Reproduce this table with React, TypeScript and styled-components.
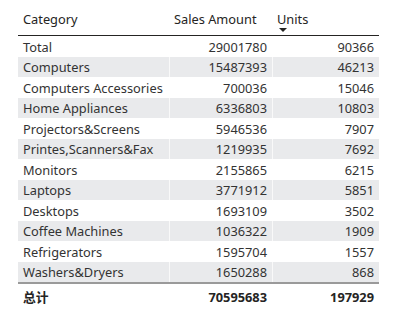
import React from "react";
import styled, { createGlobalStyle } from "styled-components";

const Global = createGlobalStyle`
  html, body { margin: 0; padding: 0; background: #ffffff; }
  body { font-family: "Noto Sans", "Noto Sans CJK SC", sans-serif; }
`;

const Page = styled.div`
  width: 404px;
  height: 331px;
  padding-left: 18px;
  box-sizing: border-box;
  background: #fff;
`;

const Table = styled.div`
  width: 361px;
  display: grid;
  grid-template-columns: 151px 103px 107px;
  font-size: 12.8px;
  color: #333;
`;

const HeaderCell = styled.div`
  position: relative;
  height: 36px;
  border-bottom: 1px solid #252423;
  padding: 11px 5px 0;
  box-sizing: border-box;
  color: #252423;
  white-space: nowrap;
  line-height: 17px;
`;

const SortArrow = styled.span`
  position: absolute;
  left: 7px;
  top: 28px;
  width: 0;
  height: 0;
  border-left: 4px solid transparent;
  border-right: 4px solid transparent;
  border-top: 4px solid #252423;
`;

const Cell = styled.div<{ $shade: boolean; $num?: boolean; $first?: boolean }>`
  height: 20.5px;
  line-height: 17px;
  padding: 2.5px 5px 0;
  box-sizing: border-box;
  background: ${(p) => (p.$shade ? "#e9eaec" : "#ffffff")};
  text-align: ${(p) => (p.$num ? "right" : "left")};
  border-left: ${(p) => (p.$first ? "none" : "1px solid rgba(255,255,255,0.7)")};
  white-space: nowrap;
  overflow: hidden;
`;

const TotalCell = styled.div<{ $num?: boolean }>`
  height: 28px;
  border-top: 2px solid #9a9a9a;
  padding: 3px 5px 0;
  box-sizing: border-box;
  font-weight: 700;
  color: #252423;
  line-height: 20px;
  text-align: ${(p) => (p.$num ? "right" : "left")};
`;

const rows: [string, number, number][] = [
  ["Total", 29001780, 90366],
  ["Computers", 15487393, 46213],
  ["Computers Accessories", 700036, 15046],
  ["Home Appliances", 6336803, 10803],
  ["Projectors&Screens", 5946536, 7907],
  ["Printes,Scanners&Fax", 1219935, 7692],
  ["Monitors", 2155865, 6215],
  ["Laptops", 3771912, 5851],
  ["Desktops", 1693109, 3502],
  ["Coffee Machines", 1036322, 1909],
  ["Refrigerators", 1595704, 1557],
  ["Washers&Dryers", 1650288, 868],
];

export default function App() {
  return (
    <Page>
      <Global />
      <Table>
        <HeaderCell>Category</HeaderCell>
        <HeaderCell>Sales Amount</HeaderCell>
        <HeaderCell>
          Units
          <SortArrow />
        </HeaderCell>
        {rows.map(([name, sales, units], i) => {
          const shade = i % 2 === 1;
          return (
            <React.Fragment key={name}>
              <Cell $shade={shade} $first>{name}</Cell>
              <Cell $shade={shade} $num>{sales}</Cell>
              <Cell $shade={shade} $num>{units}</Cell>
            </React.Fragment>
          );
        })}
        <TotalCell>总计</TotalCell>
        <TotalCell $num>70595683</TotalCell>
        <TotalCell $num>197929</TotalCell>
      </Table>
    </Page>
  );
}
